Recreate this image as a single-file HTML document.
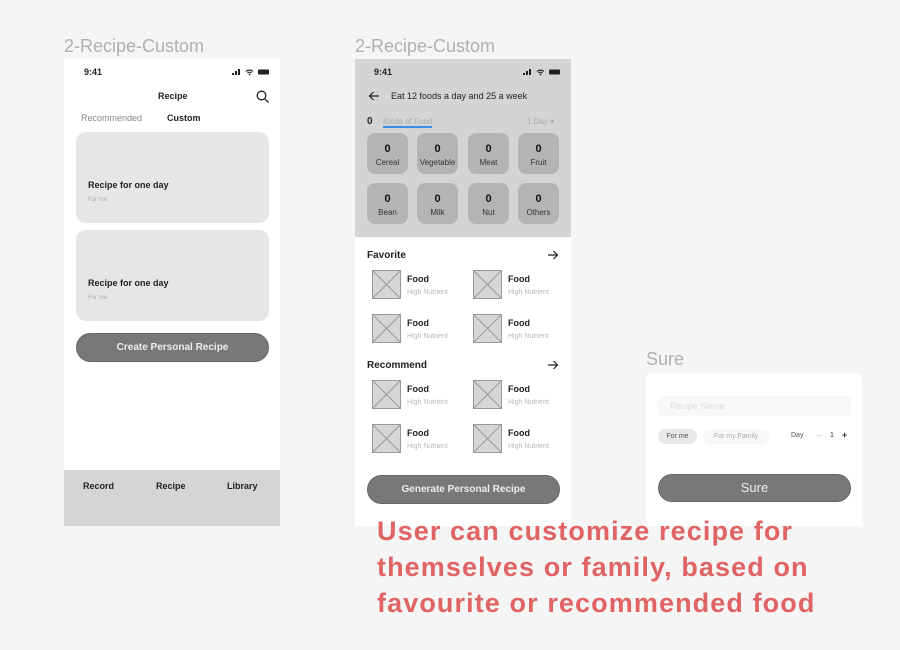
<!DOCTYPE html>
<html><head><meta charset="utf-8"><style>
*{margin:0;padding:0;box-sizing:border-box}
body{width:900px;height:650px;background:#f5f5f5;font-family:"Liberation Sans",sans-serif;position:relative;overflow:hidden;color:#222}
.a{position:absolute}
.lbl{font-size:18px;color:#b0b0b0}
.ph{background:#fff}
.t{font-size:10px;white-space:nowrap}
.b{font-weight:bold}
.sb{font-size:9px;font-weight:bold}
.tile{position:absolute;width:41px;height:41px;border-radius:8px;background:#b4b4b4;text-align:center;font-size:8px;color:#333}
.tile b{display:block;font-size:11px;margin-top:10px;margin-bottom:3px;color:#111}
.img{position:absolute;width:29px;height:29px;background:#d6d6d6;border:1px solid #999}
.img svg{position:absolute;left:0;top:0}
.fd{position:absolute;font-size:9px;font-weight:bold;color:#222}
.hn{position:absolute;font-size:7px;color:#b8b8b8}
.btn{position:absolute;background:#787878;color:#eee;text-align:center;border-radius:15px;border:1px solid #666}
</style></head><body>
<div class="a lbl" style="left:64px;top:36px">2-Recipe-Custom</div>
<div class="a lbl" style="left:355px;top:36px">2-Recipe-Custom</div>
<div class="a lbl" style="left:646px;top:349px">Sure</div>

<!-- phone 1 -->
<div class="a ph" style="left:64px;top:59px;width:216px;height:467px"></div>
<div class="a sb" style="left:84px;top:67px">9:41</div>
<svg class="a" style="left:232px;top:68px" width="40" height="8"><rect x="0" y="5" width="2" height="2" fill="#222"/><rect x="3" y="3" width="2" height="4" fill="#222"/><rect x="6" y="1" width="2" height="6" fill="#222"/><path d="M14 3.5a5 5 0 0 1 7 0M15.5 5a3 3 0 0 1 4 0" stroke="#222" stroke-width="1.2" fill="none"/><circle cx="17.5" cy="6.5" r="0.9" fill="#222"/><rect x="26" y="1.5" width="11" height="5" rx="1" fill="#222"/></svg>
<div class="a t b" style="left:158px;top:91px;font-size:9px">Recipe</div>
<svg class="a" style="left:256px;top:90px" width="14" height="14"><circle cx="5.5" cy="5.5" r="4.3" stroke="#222" stroke-width="1.3" fill="none"/><path d="M8.7 8.7L12.5 12.5" stroke="#222" stroke-width="1.3"/></svg>
<div class="a" style="left:81px;top:113px;font-size:9px;color:#888">Recommended</div>
<div class="a b" style="left:167px;top:113px;font-size:9px">Custom</div>
<div class="a" style="left:76px;top:132px;width:193px;height:91px;border-radius:10px;background:#e6e6e6"></div>
<div class="a b" style="left:88px;top:180px;font-size:9px">Recipe for one day</div>
<div class="a" style="left:88px;top:197px;font-size:6px;color:#aaa">For me</div>
<div class="a" style="left:76px;top:230px;width:193px;height:91px;border-radius:10px;background:#e6e6e6"></div>
<div class="a b" style="left:88px;top:278px;font-size:9px">Recipe for one day</div>
<div class="a" style="left:88px;top:295px;font-size:6px;color:#aaa">For me</div>
<div class="btn" style="left:76px;top:333px;width:193px;height:29px;line-height:27px;font-size:10px;font-weight:bold">Create Personal Recipe</div>
<div class="a" style="left:64px;top:470px;width:216px;height:56px;background:#d5d5d5"></div>
<div class="a b" style="left:83px;top:481px;font-size:9px">Record</div>
<div class="a b" style="left:156px;top:481px;font-size:9px">Recipe</div>
<div class="a b" style="left:227px;top:481px;font-size:9px">Library</div>

<!-- phone 2 -->
<div class="a ph" style="left:355px;top:59px;width:216px;height:467px"></div>
<div class="a" style="left:355px;top:59px;width:216px;height:178px;background:#d4d4d4"></div>
<div class="a sb" style="left:374px;top:67px">9:41</div>
<svg class="a" style="left:523px;top:68px" width="40" height="8"><rect x="0" y="5" width="2" height="2" fill="#222"/><rect x="3" y="3" width="2" height="4" fill="#222"/><rect x="6" y="1" width="2" height="6" fill="#222"/><path d="M14 3.5a5 5 0 0 1 7 0M15.5 5a3 3 0 0 1 4 0" stroke="#222" stroke-width="1.2" fill="none"/><circle cx="17.5" cy="6.5" r="0.9" fill="#222"/><rect x="26" y="1.5" width="11" height="5" rx="1" fill="#222"/></svg>
<svg class="a" style="left:368px;top:91px" width="12" height="10"><path d="M11 5H1.5M5.5 1L1.5 5L5.5 9" stroke="#222" stroke-width="1.2" fill="none"/></svg>
<div class="a" style="left:391px;top:91px;font-size:9px">Eat 12 foods a day and 25 a week</div>
<div class="a b" style="left:367px;top:116px;font-size:10px">0</div>
<div class="a" style="left:383px;top:117px;font-size:8px;color:#aaa;border-bottom:2px solid #3a8ee0;line-height:9px">Kinds of Food</div>
<div class="a" style="left:527px;top:117px;font-size:8px;color:#aaa">1 Day &#9662;</div>
<div class="tile" style="left:367px;top:133px"><b>0</b>Cereal</div>
<div class="tile" style="left:417px;top:133px"><b>0</b>Vegetable</div>
<div class="tile" style="left:468px;top:133px"><b>0</b>Meat</div>
<div class="tile" style="left:518px;top:133px"><b>0</b>Fruit</div>
<div class="tile" style="left:367px;top:183px"><b>0</b>Bean</div>
<div class="tile" style="left:417px;top:183px"><b>0</b>Milk</div>
<div class="tile" style="left:468px;top:183px"><b>0</b>Nut</div>
<div class="tile" style="left:518px;top:183px"><b>0</b>Others</div>

<div class="a b" style="left:367px;top:250px;font-size:10px">Favorite</div>
<svg class="a" style="left:547px;top:250px" width="12" height="10"><path d="M1 5H10.5M6.5 1L10.5 5L6.5 9" stroke="#222" stroke-width="1.2" fill="none"/></svg>
<div class="a b" style="left:367px;top:360px;font-size:10px">Recommend</div>
<svg class="a" style="left:547px;top:360px" width="12" height="10"><path d="M1 5H10.5M6.5 1L10.5 5L6.5 9" stroke="#222" stroke-width="1.2" fill="none"/></svg>

<div id="foods"></div>
<script>
var h='',ys=[270,314,380,424],xs=[372,473];
ys.forEach(function(y){xs.forEach(function(x){
h+='<div class="img" style="left:'+x+'px;top:'+y+'px"><svg width="27" height="27"><path d="M0 0L27 27M27 0L0 27" stroke="#999" stroke-width="1"/></svg></div>';
h+='<div class="fd" style="left:'+(x+35)+'px;top:'+(y+4)+'px">Food</div>';
h+='<div class="hn" style="left:'+(x+35)+'px;top:'+(y+19)+'px">High Nutrient</div>';
});});
document.getElementById('foods').innerHTML=h;
</script>
<div class="btn" style="left:367px;top:475px;width:193px;height:29px;line-height:27px;font-size:10px;font-weight:bold">Generate Personal Recipe</div>

<!-- dialog -->
<div class="a" style="left:646px;top:373px;width:216px;height:153px;background:#fff;border-radius:6px 6px 0 0"></div>
<div class="a" style="left:658px;top:396px;width:193px;height:20px;background:#f8f8f8;border-radius:4px;font-size:9px;color:#ddd;padding:5px 12px">Recipe Name</div>
<div class="a" style="left:658px;top:429px;width:39px;height:15px;background:#e8e8e8;border-radius:8px;font-size:7px;color:#555;text-align:center;line-height:15px">For me</div>
<div class="a" style="left:703px;top:429px;width:66px;height:15px;background:#f8f8f8;border-radius:8px;font-size:7px;color:#aaa;text-align:center;line-height:15px">For my Family</div>
<div class="a" style="left:791px;top:432px;font-size:7px;color:#555">Day</div>
<div class="a" style="left:817px;top:431px;font-size:8px;color:#bbb">–</div>
<div class="a" style="left:830px;top:432px;font-size:7px;color:#333">1</div>
<div class="a b" style="left:842px;top:430px;font-size:9px;color:#333">+</div>
<div class="btn" style="left:658px;top:474px;width:193px;height:28px;line-height:26px;font-size:13px">Sure</div>

<div class="a" style="left:377px;top:513px;font-size:27px;line-height:36px;color:#e06464;font-weight:bold;letter-spacing:1.1px;white-space:nowrap">User can customize recipe for<br>themselves or family, based on<br>favourite or recommended food</div>
</body></html>
